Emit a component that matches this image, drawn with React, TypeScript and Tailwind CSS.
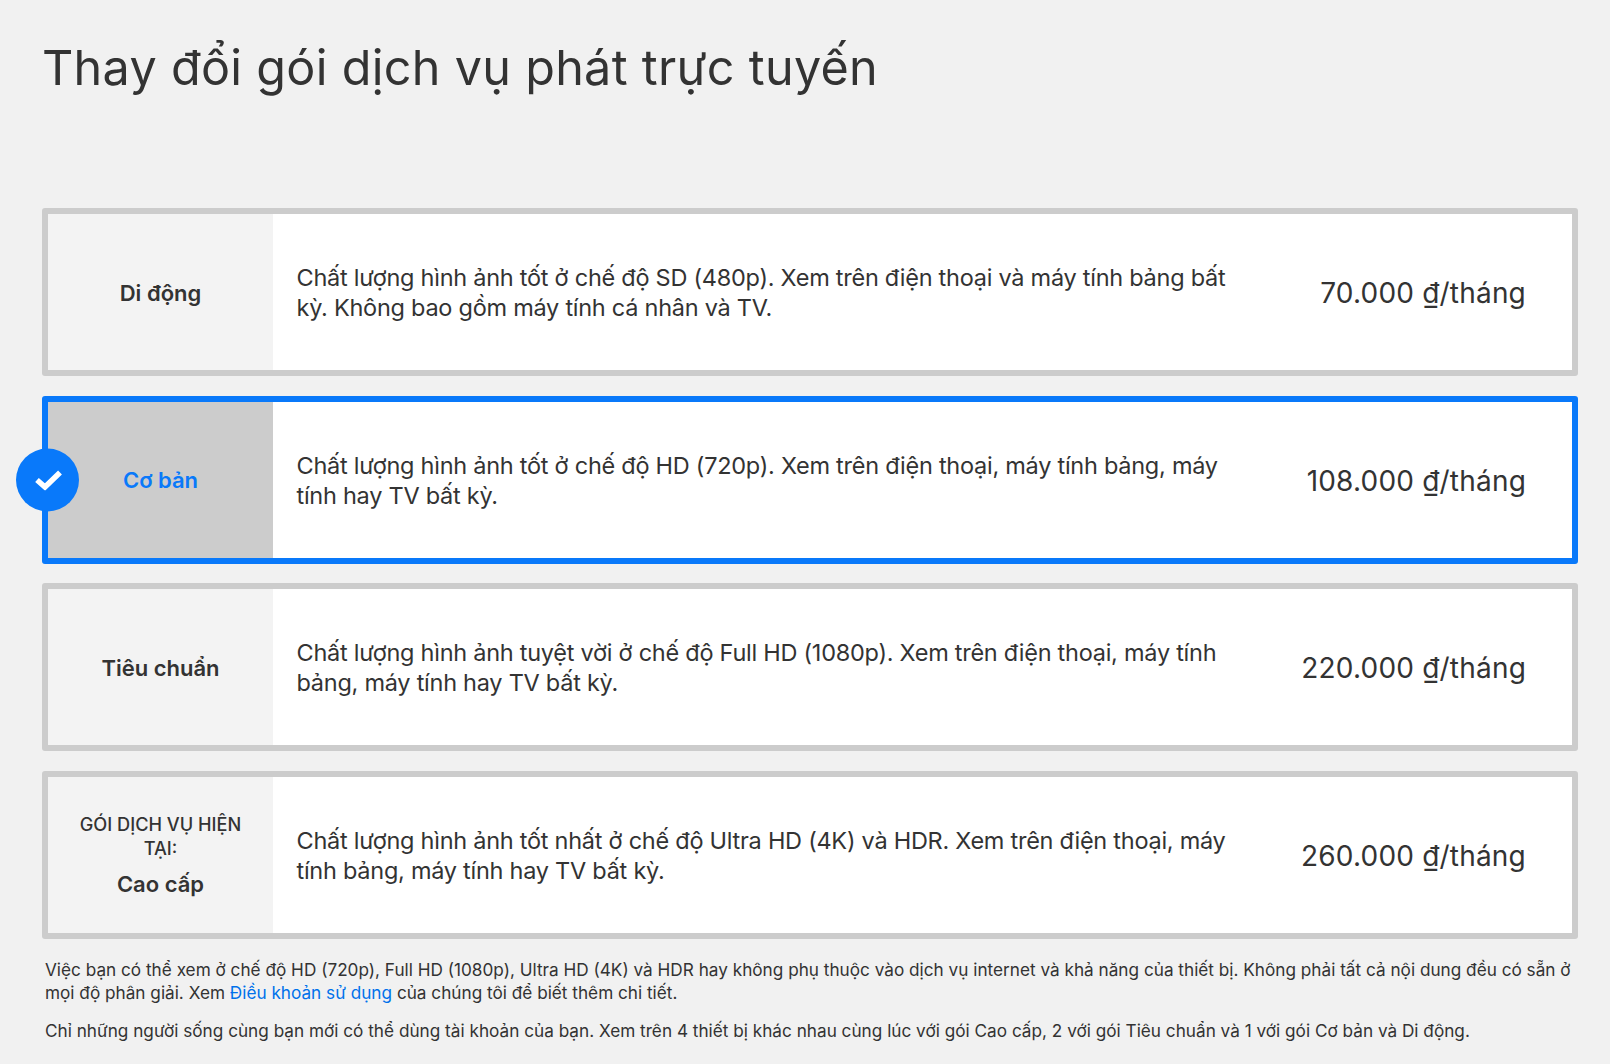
const plans = [
  { name: "Di động", desc: "Chất lượng hình ảnh tốt ở chế độ SD (480p). Xem trên điện thoại và máy tính bảng bất kỳ. Không bao gồm máy tính cá nhân và TV.", price: "70.000 ₫/tháng" },
  { name: "Cơ bản", selected: true, desc: "Chất lượng hình ảnh tốt ở chế độ HD (720p). Xem trên điện thoại, máy tính bảng, máy tính hay TV bất kỳ.", price: "108.000 ₫/tháng" },
  { name: "Tiêu chuẩn", desc: "Chất lượng hình ảnh tuyệt vời ở chế độ Full HD (1080p). Xem trên điện thoại, máy tính bảng, máy tính hay TV bất kỳ.", price: "220.000 ₫/tháng" },
  { name: "Cao cấp", current: true, desc: "Chất lượng hình ảnh tốt nhất ở chế độ Ultra HD (4K) và HDR. Xem trên điện thoại, máy tính bảng, máy tính hay TV bất kỳ.", price: "260.000 ₫/tháng" },
];

export default function App() {
  return (
    <div className="min-h-[1064px] w-[1610px] overflow-hidden bg-[#f1f1f1] px-[42px] font-['Inter','Noto_Sans',sans-serif] text-[#333]">
      <h1 className="pt-[36px] text-[48.5px] leading-[64px] font-normal tracking-[0.3px]">Thay đổi gói dịch vụ phát trực tuyến</h1>
      <div className="mt-[108px] flex w-[1536px] flex-col gap-[19.67px]">
        {plans.map((p) => (
          <div key={p.name} className={`relative flex h-[168px] rounded-[3px] border-[6px] bg-white ${p.selected ? "border-[#0979fa]" : "border-[#cccccc]"}`}>
            {p.selected && (
              <div className="absolute top-1/2 left-[-32px] flex h-[63px] w-[63px] -translate-y-1/2 items-center justify-center rounded-full bg-[#0979fa]">
                <svg width="27" height="21" viewBox="0 0 27 21" fill="none" className="ml-[1px]">
                  <path d="M2 10.5 L10 17.5 L25 3" stroke="white" strokeWidth="5.5" />
                </svg>
              </div>
            )}
            <div className={`flex w-[225px] shrink-0 flex-col items-center justify-center px-[22px] pt-[1px] text-center ${p.selected ? "bg-[#cccccc] text-[#0979fa]" : "bg-[#f3f3f3]"}`}>
              {p.current && <div className="mb-[10px] text-[18.2px] leading-[24px] font-medium">GÓI DỊCH VỤ HIỆN TẠI:</div>}
              <div className="text-[22px] leading-[28px] font-semibold">{p.name}</div>
            </div>
            <div className="flex w-[975px] shrink-0 items-center pl-[23.5px] pt-[2px] text-[23.5px] leading-[30px] tracking-[-0.26px]">
              <p className="w-[934px]">{p.desc}</p>
            </div>
            <div className="flex flex-1 items-center justify-end pr-[46px] pt-[2px] text-[28px] leading-[36px] tracking-[0.2px] whitespace-nowrap">{p.price}</div>
          </div>
        ))}
      </div>
      <div className="mt-[19px] w-[1536px] pl-[3px] text-[17.2px] leading-[23px]">
        <p>Việc bạn có thể xem ở chế độ HD (720p), Full HD (1080p), Ultra HD (4K) và HDR hay không phụ thuộc vào dịch vụ internet và khả năng của thiết bị. Không phải tất cả nội dung đều có sẵn ở mọi độ phân giải. Xem <span className="text-[#0071eb]">Điều khoản sử dụng</span> của chúng tôi để biết thêm chi tiết.</p>
        <p className="mt-[15px]">Chỉ những người sống cùng bạn mới có thể dùng tài khoản của bạn. Xem trên 4 thiết bị khác nhau cùng lúc với gói Cao cấp, 2 với gói Tiêu chuẩn và 1 với gói Cơ bản và Di động.</p>
      </div>
    </div>
  );
}
